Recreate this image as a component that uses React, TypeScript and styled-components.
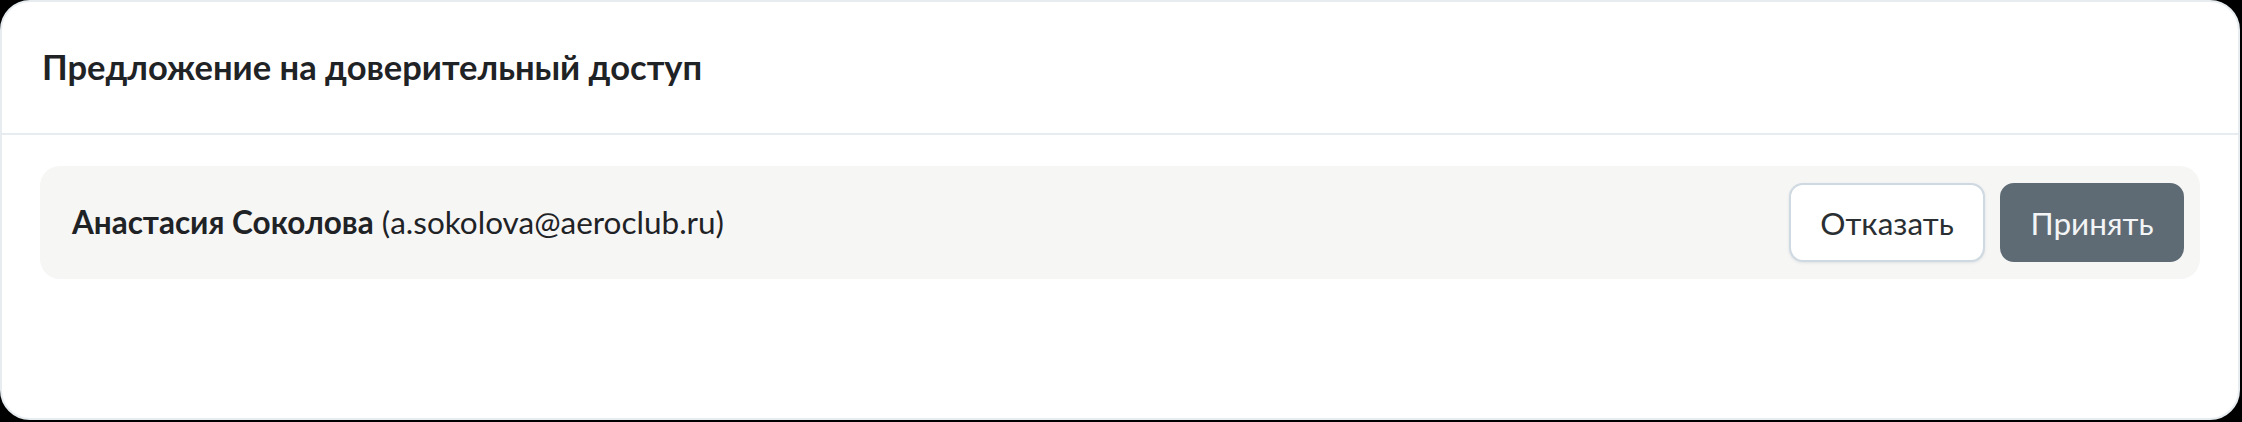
import React from "react";
import styled, { createGlobalStyle } from "styled-components";

const Global = createGlobalStyle`
  html, body {
    margin: 0;
    padding: 0;
    background: #000;
  }
  * { box-sizing: border-box; }
`;

const Card = styled.div`
  width: 2240px;
  height: 420px;
  background: #fff;
  border: 2px solid #e6ecf0;
  border-radius: 30px;
  font-family: "Lato", "Noto Sans", "Liberation Sans", sans-serif;
  color: #1f2326;
  display: flex;
  flex-direction: column;
`;

const Header = styled.div`
  height: 133px;
  display: flex;
  align-items: center;
  padding: 0 38px 2px 40px;
  border-bottom: 2px solid #e6ecf0;
`;

const Title = styled.h1`
  margin: 0;
  font-size: 34.5px;
  font-weight: 700;
  letter-spacing: 0;
`;

const Body = styled.div`
  padding: 31px 38px;
`;

const Row = styled.div`
  height: 113px;
  background: #f6f6f5;
  border-radius: 20px;
  display: flex;
  align-items: center;
  justify-content: space-between;
  padding: 0 16px 0 32px;
`;

const Person = styled.div`
  font-size: 31.5px;
  font-weight: 400;
  color: #1f2326;
  padding-bottom: 2px;
`;

const Name = styled.span`
  font-weight: 700;
`;

const Actions = styled.div`
  display: flex;
  gap: 15px;
`;

const Button = styled.button<{ $primary?: boolean }>`
  height: 79px;
  padding: 0;
  border-radius: 14px;
  font-family: inherit;
  font-size: 31.5px;
  cursor: pointer;
  ${(p) =>
    p.$primary
      ? `
    background: #5e6b75;
    color: #f3f4f5;
    border: 2px solid #5e6b75;
    width: 184px;
  `
      : `
    background: #fff;
    color: #2a2f33;
    border: 2px solid #cfd9e1;
    box-shadow: 0 1px 3px rgba(60, 80, 100, 0.12);
    width: 196px;
  `}
`;

export default function App() {
  return (
    <>
      <Global />
      <Card>
        <Header>
          <Title>Предложение на доверительный доступ</Title>
        </Header>
        <Body>
          <Row>
            <Person>
              <Name>Анастасия Соколова</Name> (a.sokolova@aeroclub.ru)
            </Person>
            <Actions>
              <Button>Отказать</Button>
              <Button $primary>Принять</Button>
            </Actions>
          </Row>
        </Body>
      </Card>
    </>
  );
}
